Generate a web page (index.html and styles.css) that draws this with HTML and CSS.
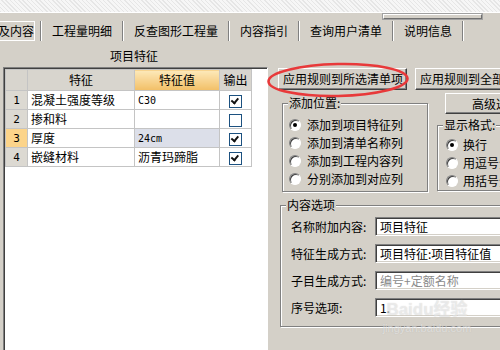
FILE: index.html
```html
<!DOCTYPE html>
<html lang="zh-CN">
<head>
  <meta charset="UTF-8">
  <title>项目特征</title>
  <link rel="stylesheet" href="styles.css">
</head>
<body>
  <div class="window">
    <div class="strip"></div>
    <span class="thumb"></span>

    <div class="tabs">
      <div class="tab active"><span>及内容</span></div>
      <div class="tab">工程量明细</div>
      <div class="tab">反查图形工程量</div>
      <div class="tab">内容指引</div>
      <div class="tab">查询用户清单</div>
      <div class="tab">说明信息</div>
    </div>

    <div class="main">
      <div class="left">
        <div class="caption">项目特征</div>
        <div class="grid">
          <table>
            <colgroup>
              <col class="c-num"><col class="c-name"><col class="c-val"><col class="c-out">
            </colgroup>
            <thead>
              <tr>
                <th></th>
                <th>特征</th>
                <th class="val-head">特征值</th>
                <th>输出</th>
              </tr>
            </thead>
            <tbody>
              <tr>
                <td class="num">1</td>
                <td>混凝土强度等级</td>
                <td class="mono">C30</td>
                <td class="chk"><span class="box on"></span></td>
              </tr>
              <tr>
                <td class="num">2</td>
                <td>掺和料</td>
                <td></td>
                <td class="chk"><span class="box"></span></td>
              </tr>
              <tr>
                <td class="num cur">3</td>
                <td>厚度</td>
                <td class="mono sel">24cm</td>
                <td class="chk"><span class="box on"></span></td>
              </tr>
              <tr>
                <td class="num">4</td>
                <td>嵌缝材料</td>
                <td>沥青玛蹄脂</td>
                <td class="chk"><span class="box on"></span></td>
              </tr>
            </tbody>
          </table>
        </div>
      </div>

      <div class="right">
        <div class="btn-row">
          <button class="btn">应用规则到所选清单项</button>
          <button class="btn">应用规则到全部清单项</button>
        </div>

        <div class="options">
          <div class="group pos">
            <div class="group-title">添加位置:</div>
            <div class="radio on"><span class="dot"></span>添加到项目特征列</div>
            <div class="radio"><span class="dot"></span>添加到清单名称列</div>
            <div class="radio"><span class="dot"></span>添加到工程内容列</div>
            <div class="radio"><span class="dot"></span>分别添加到对应列</div>
          </div>
          <div class="side">
            <button class="btn adv">高级选项</button>
            <div class="group fmt">
              <div class="group-title">显示格式:</div>
              <div class="radio on"><span class="dot"></span>换行</div>
              <div class="radio"><span class="dot"></span>用逗号分隔</div>
              <div class="radio"><span class="dot"></span>用括号分隔</div>
            </div>
          </div>
        </div>

        <div class="group content">
          <div class="group-title">内容选项</div>
          <div class="field"><span class="label">名称附加内容:</span><span class="input">项目特征</span></div>
          <div class="field"><span class="label">特征生成方式:</span><span class="input">项目特征:项目特征值</span></div>
          <div class="field"><span class="label">子目生成方式:</span><span class="input dis">编号+定额名称</span></div>
          <div class="field"><span class="label">序号选项:</span><span class="input">1.</span></div>
        </div>
      </div>
    </div>

    <!-- red marker drawn over the first button -->
    <svg class="mark" width="146" height="40" viewBox="0 0 146 40">
      <ellipse cx="72" cy="19" rx="69.5" ry="16" transform="rotate(-1.2 72 19)" fill="none" stroke="#e8393a" stroke-width="2.6"/>
    </svg>

    <div class="watermark">
      <span class="wm-big">Baidu经验</span>
      <span class="wm-small">jingyan.baidu.com</span>
    </div>
  </div>
</body>
</html>
```

FILE: styles.css
```css
body {
  margin: 0;
  background: #d4d0c8;
  font: 12px/16px "Noto Sans CJK SC", "Noto Sans", sans-serif;
  color: #000;
}

.window {
  position: relative;
  width: 500px;
  height: 350px;
  overflow: hidden;
}

.strip {
  height: 12px;
  background: repeating-linear-gradient(45deg, #e6e6e6 0 1px, #f6f6f6 1px 3px);
  border-bottom: 1px solid #fff;
}

.thumb {
  position: absolute;
  left: 383px;
  top: 14px;
  width: 97px;
  height: 3px;
  border: 1px solid;
  border-color: #fff #707070 #707070 #fff;
  box-shadow: 0 0 0 1px #a0a0a0;
  background: #d4d0c8;
}

/* tab bar */
.tabs {
  display: flex;
  height: 29px;
}

.tab {
  margin-top: 8px;
  margin-right: 1px;
  height: 20px;
  line-height: 20px;
  padding: 0 10px;
  border-right: 1px solid #808080;
  box-shadow: 1px 0 0 #fff;
  white-space: nowrap;
}

.tab.active {
  width: 40px;
  padding: 0;
  overflow: hidden;
}

.tab.active span {
  display: inline-block;
  margin-left: -2px;
  width: 36px;
  height: 18px;
  line-height: 18px;
  border: 1px solid #fff;
  border-left: none;
}

.main {
  display: flex;
  height: 308px;
}

/* left: feature grid */
.left {
  width: 268px;
  flex: none;
}

.caption {
  height: 22px;
  padding-top: 3px;
  line-height: 22px;
  text-align: center;
}

.grid {
  margin-left: 3px;
  height: 290px;
  background: #fff;
  border-top: 1px solid #808080;
  border-left: 1px solid #808080;
  border-right: 1px solid #fff;
  box-shadow: inset 1px 1px 0 #404040;
}

table {
  margin: 1px 0 0 1px;
  border-collapse: collapse;
  table-layout: fixed;
  width: 246px;
}

.c-num { width: 22px; }
.c-name { width: 107px; }
.c-val { width: 85px; }
.c-out { width: 32px; }

th, td {
  border: 1px solid #c4c4c4;
  padding: 0 3px;
  white-space: nowrap;
  overflow: hidden;
}

th {
  height: 20px;
  font-weight: normal;
  background: #d8d5ce;
  text-align: center;
}

td {
  height: 18px;
}

.val-head {
  background: linear-gradient(#fde9ba, #f2bf66);
}

.num {
  background: #dcd9d2;
  text-align: center;
  font: 11px "DejaVu Sans Mono", monospace;
}

.num.cur {
  background: #fcd48a;
}

.mono {
  font: 10px "DejaVu Sans Mono", monospace;
}

.sel {
  background: #dcdfe9;
}

.chk {
  text-align: center;
  padding: 0;
}

.box {
  display: inline-block;
  width: 11px;
  height: 11px;
  border: 1px solid #1c5180;
  background: #fff;
  vertical-align: middle;
  position: relative;
}

.box.on::after {
  content: "";
  position: absolute;
  left: 2px;
  top: 2px;
  width: 5px;
  height: 3px;
  border-left: 2px solid #111;
  border-bottom: 2px solid #111;
  transform: rotate(-50deg);
  transform-origin: 40% 60%;
}

/* right: options */
.right {
  flex: 1;
  min-width: 0;
}

.btn {
  font: inherit;
  color: #000;
  height: 22px;
  padding: 0 4px;
  background: #d4d0c8;
  border: 1px solid;
  border-color: #fff #404040 #404040 #fff;
  box-shadow: inset -1px -1px 0 #808080;
  white-space: nowrap;
  flex: none;
  width: 129px;
}

.btn-row {
  display: flex;
  gap: 8px;
  margin: 26px 0 0 10px;
}

.options {
  display: flex;
  margin-left: 14px;
}

.group {
  position: relative;
  box-sizing: border-box;
  border: 1px solid #808080;
  box-shadow: 1px 1px 0 #fff, inset 1px 1px 0 #fff;
}

.group-title {
  position: absolute;
  top: -8px;
  left: 5px;
  padding: 0 1px;
  line-height: 14px;
  background: #d4d0c8;
  white-space: nowrap;
}

.pos {
  flex: none;
  width: 146px;
  height: 89px;
  margin-top: 13px;
  padding: 12px 0 0 6px;
}

.radio {
  display: flex;
  align-items: center;
  gap: 6px;
  height: 18px;
  white-space: nowrap;
}

.dot {
  position: relative;
  box-sizing: border-box;
  width: 12px;
  height: 12px;
  border-radius: 50%;
  border: 1px solid;
  border-color: #808080 #fff #fff #808080;
  box-shadow: inset 1px 1px 0 #404040;
  background: #fff;
  flex: none;
}

.radio.on .dot::after {
  content: "";
  position: absolute;
  left: 3px;
  top: 3px;
  width: 4px;
  height: 4px;
  border-radius: 50%;
  background: #000;
}

.side {
  margin: 3px 0 0 9px;
}

.adv {
  margin-left: 8px;
  width: 102px;
  height: 21px;
}

.fmt {
  margin-top: 11px;
  width: 100px;
  height: 66px;
  padding: 10px 0 0 8px;
}

.fmt .radio {
  gap: 5px;
}

.content {
  margin: 13px 0 0 12px;
  width: 260px;
  height: 122px;
  padding: 11px 0 0 10px;
}

.field {
  display: flex;
  align-items: center;
  height: 19px;
  margin-bottom: 8px;
}

.label {
  width: 84px;
  flex: none;
  white-space: nowrap;
}

.input {
  box-sizing: border-box;
  width: 160px;
  height: 19px;
  line-height: 17px;
  padding-left: 4px;
  border: 1px solid;
  border-color: #808080 #fff #fff #808080;
  box-shadow: inset 1px 1px 0 #404040, inset -1px -1px 0 #d4d0c8;
  background: #fff;
  white-space: nowrap;
}

.input.dis {
  color: #8a8a8a;
}

.mark {
  position: absolute;
  left: 266px;
  top: 61px;
}

.watermark {
  position: absolute;
  left: 378px;
  top: 298px;
  width: 98px;
  text-align: center;
  white-space: nowrap;
  color: rgba(255, 255, 255, 0.5);
  text-shadow: 0 0 1px rgba(150, 150, 150, 0.45);
  pointer-events: none;
}

.wm-big {
  display: block;
  font: bold 17px/24px "Liberation Sans", "Noto Sans CJK SC", sans-serif;
}

.wm-small {
  display: block;
  font: 11px/12px "Liberation Sans", sans-serif;
}
```
